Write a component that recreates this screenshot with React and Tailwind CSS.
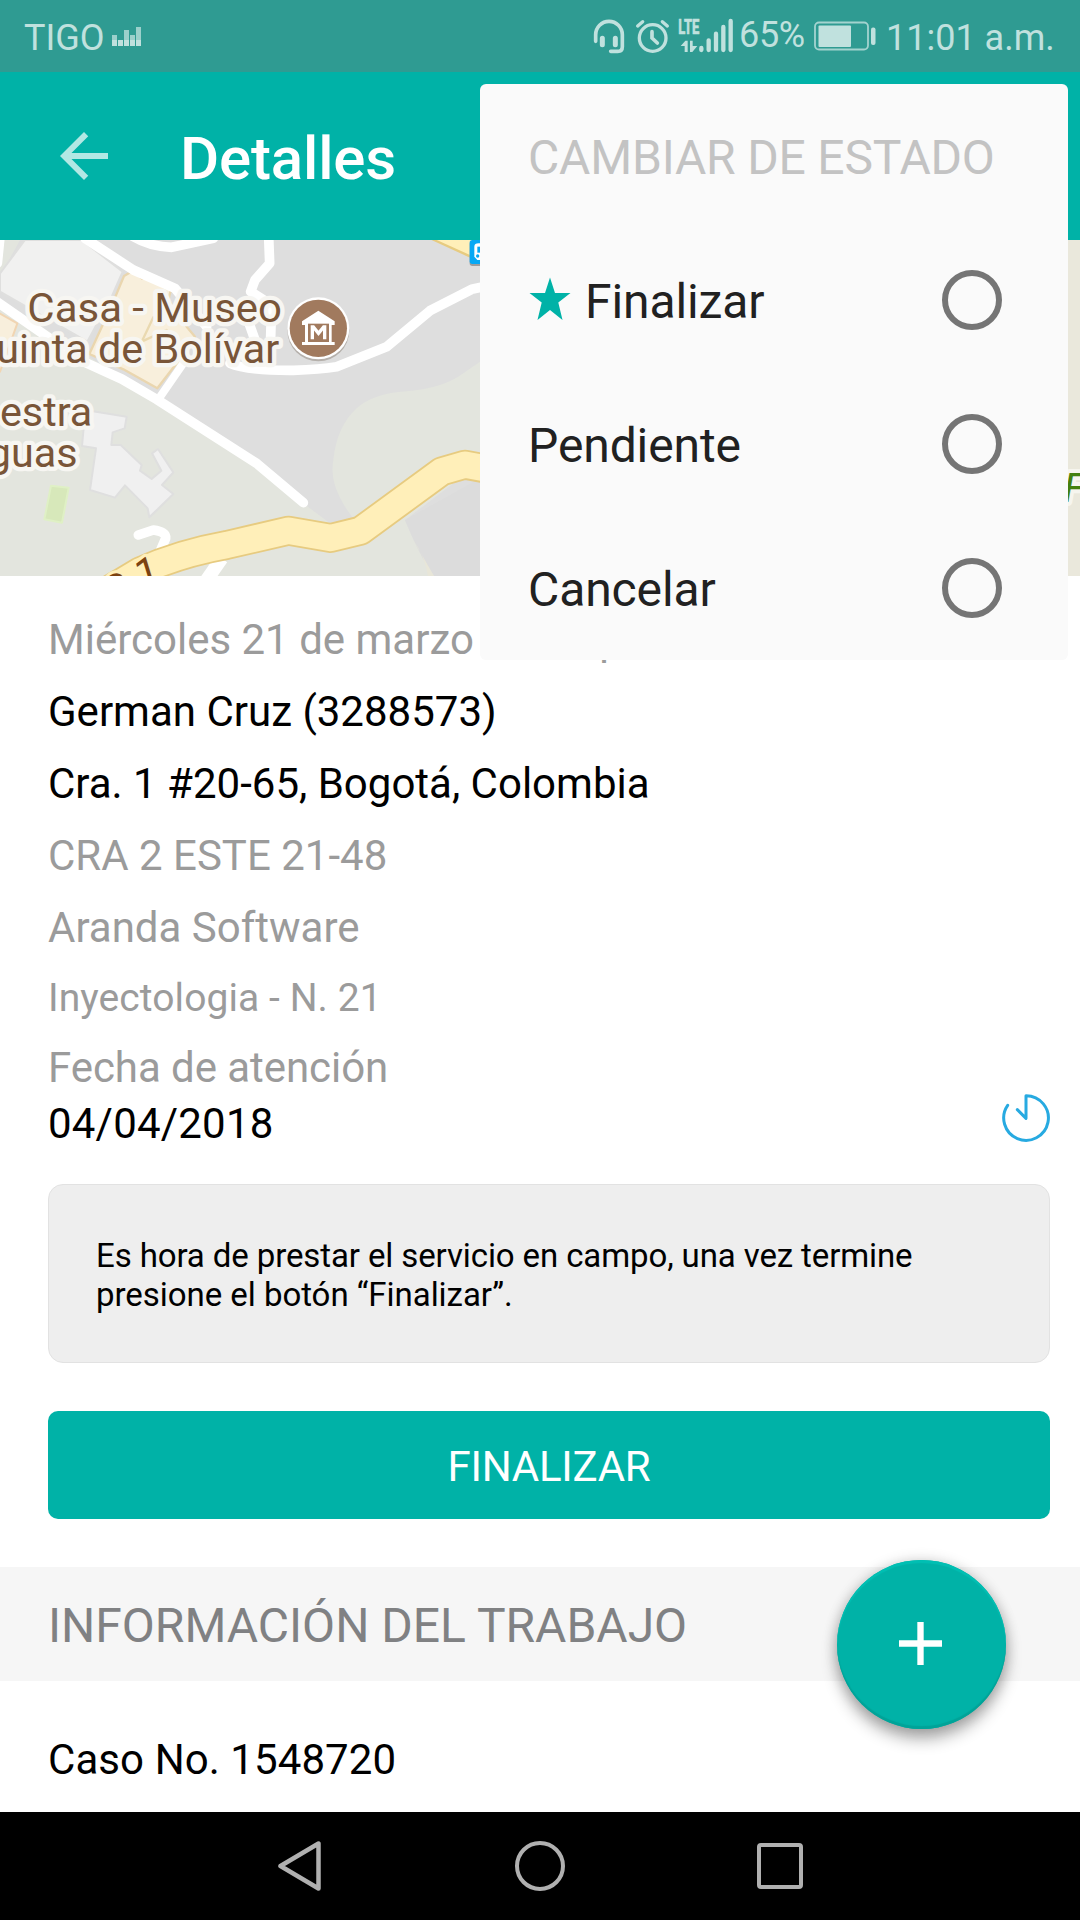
const statusTint = "#c0e1de";

function StatusIcons() {
  return (
    <svg viewBox="90 0 438 216" className="h-[72px] w-[146px] shrink-0" fill="none" stroke={statusTint} strokeLinecap="round">
      {/* headset */}
      <path d="M107 124V104a40 40 0 0 1 80 0V140q0 14 -14 14H152" strokeWidth="11" />
      <path d="M127 115V134M166 115V134" strokeWidth="15" />
      {/* alarm clock */}
      <circle cx="278" cy="114" r="40" strokeWidth="10" />
      <path d="M276 95V114L292 129" strokeWidth="11" />
      <path d="M233 78L248 65M307 65L322 78" strokeWidth="10" />
      {/* network */}
      <text x="355" y="101" fontSize="61" fontWeight="700" fontFamily="Roboto, sans-serif" textLength="63" lengthAdjust="spacingAndGlyphs" fill={statusTint} stroke={statusTint} strokeWidth="2">LTE</text>
      <path d="M383 122V156H374V138H362L376 122ZM390 122H398V138H412L397 156H390Z" fill={statusTint} stroke="none" />
      <path d="M424 144V150M446 121V150M468 101V150M490 81V150M512 63V150" strokeWidth="13" />
    </svg>
  );
}

function StatusBar() {
  return (
    <div className="flex h-[72px] items-center bg-[#2f9b92] pl-6 pr-[25px] text-[36px] leading-[72px] text-[#c0e1de]">
      <span className="w-[88px] pt-[3px]">TIGO</span>
      <svg viewBox="0 0 29 20" className="h-5 w-[29px] mt-[1px]" fill={statusTint}>
        <path opacity=".75" d="M0 8h5v11H0zM6 13h5v6H6zM12 3h5v16h-5zM18 8h5v11h-5zM24 0h5v19h-5z" />
        <path d="M0 13h5v6H0zM6 13h5v6H6zM12 13h5v6h-5zM18 13h5v6h-5zM24 13h5v6h-5z" />
      </svg>
      <div className="ml-auto flex items-center">
        <StatusIcons />
        <span className="ml-[3px] w-[75px] -mt-[3px] tracking-[-0.3px]">65%</span>
        <svg viewBox="0 0 62 30" className="mt-[-1px] h-[30px] w-[62px]" fill={statusTint}>
          <rect x="1" y="1.5" width="53" height="27" rx="4" fill="none" stroke={statusTint} strokeWidth="1.8" opacity=".8" />
          <rect x="4.500" y="4.500" width="32.500" height="21.500" rx="1" />
          <rect x="57" y="6.500" width="4.500" height="17.500" rx="2" />
        </svg>
        <span className="ml-[10px] w-[169px] whitespace-nowrap pt-[3px]">11:01 a.m.</span>
      </div>
    </div>
  );
}

function Header() {
  return (
    <div className="flex h-[168px] items-center bg-[#00b2a7] pl-12">
      <svg viewBox="0 0 24 24" className="h-[72px] w-[72px]" fill="#b2e8e4">
        <path d="M20 11H7.830l5.590-5.590L12 4l-8 8 8 8 1.410-1.410L7.830 13H20z" />
      </svg>
      <h1 className="ml-[60px] pt-[5px] text-[60px] font-medium tracking-[-0.15px] text-white">Detalles</h1>
    </div>
  );
}

function Map() {
  return (
    <svg viewBox="0 30 3240 1008" className="block h-[336px] w-full" fill="none" strokeLinejoin="round" strokeLinecap="round" fontFamily="Roboto, sans-serif" fontSize="124">
      <rect y="30" width="3240" height="1008" fill="#dedede" />
      {/* terrain */}
      <path d="M0 30H60L0 140V210L470 510L770 700L910 820L990 880L1060 865Q985 770 1000 690Q1010 590 1070 535Q1120 490 1220 484Q1330 475 1390 430L1440 395V700L1215 870Q1260 980 1302 1038H0Z" fill="#e3e5de" />
      <path d="M1440 745L1215 870Q1260 980 1302 1038H1600V700Z" fill="#dcdcdc" />
      <path d="M1240 930L1302 1038H1284Q1275 980 1240 930Z" fill="#e8e6d8" />
      <rect x="3150" y="30" width="90" height="1008" fill="#eae8dc" />
      {/* blocks and buildings */}
      <path d="M75 30H245L368 125L335 200L262 335L0 185V130Z" fill="#f1f1f0" stroke="#dfdfde" strokeWidth="6" />
      <path d="M399 122L426 146L440 138L515 170L505 210L560 290L585 320L530 400L472 475L370 418L268 372L340 215L372 138Z" fill="#f8efdc" stroke="#ead6af" strokeWidth="7" />
      <path d="M460 262L425 335L500 300" stroke="#ead9b0" strokeWidth="7" />
      <path d="M-10 245L52 280L0 425" fill="#f8efdc" stroke="#f1d5b2" strokeWidth="6" />
      <path d="M256 540L380 560L374 595L338 607L334 645L362 645L425 705L420 722L455 747L484 722L456 670L474 657L520 727L486 765L520 792L448 862L443 835L375 766L345 803L270 780L288 655L246 648Z" fill="#f0f0f0" stroke="#dfdfdf" strokeWidth="6" />
      <path d="M153 767L206 773L186 878L133 868Z" fill="#d7e8ba" stroke="#dff0c5" strokeWidth="6" />
      {/* streets */}
      <g stroke="#fff" strokeWidth="29">
        <path d="M-10 215L130 312L250 395L365 447L470 508L770 700L910 818" />
        <path d="M255 25L400 120L525 175L620 290" />
        <path d="M400 20Q450 50 515 52L640 25" />
        <path d="M806 20L809 100L765 150L752 185L815 225L812 320" />
        <path d="M740 260L765 330" />
        <path d="M0 20L-8 100" />
        <path d="M690 400Q740 422 880 421Q960 418 1010 410L1160 350L1290 242L1415 178L1450 170" />
        <path d="M550 400L482 498" strokeWidth="24" />
        <path d="M415 915L460 900Q500 905 497 925L480 965L440 1000" />
        <path d="M665 985L620 1050" strokeWidth="40" strokeLinecap="butt" />
      </g>
      {/* main avenue */}
      <g strokeLinecap="butt">
        <path d="M310 1090L420 1024Q540 970 680 945L866 902L992 924L1082 902L1325 724L1395 704L1460 716" stroke="#e7cb80" strokeWidth="90" />
        <path d="M310 1090L420 1024Q540 970 680 945L866 902L992 924L1082 902L1325 724L1395 704L1460 716" stroke="#ffefb9" strokeWidth="79" />
        <path d="M1290 28L1410 83H1450V28Z" fill="#e7cb80" />
        <path d="M1306 28L1410 75H1450V28Z" fill="#ffefb9" />
      </g>
      {/* bus stop */}
      <rect x="1409" y="34" width="80" height="74" rx="8" fill="#9c9c9c" />
      <rect x="1409" y="30" width="80" height="72" rx="8" fill="#06a8f4" />
      <path d="M1423 80V50Q1423 40 1436 40H1475V90H1432Z" fill="#fff" />
      <path d="M1432 50H1475V68H1432Z" fill="#06a8f4" />
      <circle cx="1433" cy="78" r="5" fill="#06a8f4" />
      {/* labels */}
      <g fill="#795538" stroke="#f7f6f2" strokeWidth="26" paintOrder="stroke">
        <text x="82" y="275" textLength="764" lengthAdjust="spacingAndGlyphs">Casa - Museo</text>
        <text x="838" y="400" textAnchor="end">uinta de Bolívar</text>
        <text x="277" y="587" textAnchor="end">estra</text>
        <text x="233" y="712" textAnchor="end">guas</text>
      </g>
      <text transform="translate(486 1056) rotate(-17)" textAnchor="end" fill="#7c4310" stroke="#ffefb9" strokeWidth="18" paintOrder="stroke" fontSize="122">a 1</text>
      <text x="3190" y="816" fontStyle="italic" fill="#43800f" stroke="#f6f5ee" strokeWidth="24" paintOrder="stroke">F</text>
      {/* museum pin */}
      <circle cx="955" cy="301" r="93" fill="#b5b0ab" />
      <circle cx="955" cy="295" r="93" fill="#fff" />
      <circle cx="955" cy="295" r="86" fill="#a17a5e" />
      <path d="M955 242L1004 274V285H995V336H1004V345H906V336H915V285H906V274Z" fill="#fff" />
      <path d="M924 281H987V336H924Z" fill="#a17a5e" />
      <path d="M937 328V291H940L955.500 310L971 291H974V328" stroke="#fff" strokeWidth="10" strokeLinejoin="miter" strokeLinecap="butt" />
    </svg>
  );
}

function Radio() {
  return <span className="h-[60px] w-[60px] rounded-full border-[6px] border-[#757575]" />;
}

function MenuItem({ label, starred }) {
  return (
    <li className="flex h-36 items-center justify-between">
      <span className="flex items-center">
        {starred && (
          <svg viewBox="0 0 44 46" className="-mt-[2px] mr-[13px] h-[46px] w-11" fill="#00b2a7">
            <path d="M22 1.500L27 17H42.500L30.300 26.500L34.500 44L22 34L9.500 44L13.700 26.500L1.500 17H17Z" />
          </svg>
        )}
        <span className="pt-[3px]">{label}</span>
      </span>
      <Radio />
    </li>
  );
}

function StatusMenu() {
  return (
    <div className="absolute left-[480px] top-[84px] h-[576px] w-[588px] rounded-md bg-[#fafafa] pl-12 pr-[66px] text-[48px] tracking-[-0.1px] text-[#212121]">
      <div className="flex h-36 items-center whitespace-nowrap pt-[3px] tracking-[-0.18px] text-[#c3c3c3]">CAMBIAR DE ESTADO</div>
      <ul>
        <MenuItem label="Finalizar" starred />
        <MenuItem label="Pendiente" />
        <MenuItem label="Cancelar" />
      </ul>
    </div>
  );
}

function Details() {
  return (
    <div className="pl-12 pr-[30px] pt-7 text-[42px] leading-[72px] text-black">
      <p className="text-[#9b9b9b]">Miércoles 21 de marzo 02:00 p.m.</p>
      <p>German Cruz (3288573)</p>
      <p>Cra. 1 #20-65, Bogotá, Colombia</p>
      <p className="text-[#9b9b9b]">CRA 2 ESTE 21-48</p>
      <p className="text-[#9b9b9b]">Aranda Software</p>
      <p className="text-[39px] leading-[69px] tracking-[0.08px] text-[#9b9b9b]">Inyectologia - N. 21</p>
      <div className="flex items-end justify-between">
        <div>
          <p className="-mt-px leading-[71px] tracking-[-0.06px] text-[#9b9b9b]">Fecha de atención</p>
          <p className="leading-[42px] tracking-[0.2px]">04/04/2018</p>
        </div>
        <svg viewBox="186 101 144 144" className="mb-[3px] h-12 w-12" fill="none" stroke="#27aae1" strokeWidth="9" strokeLinecap="round" strokeLinejoin="round">
          <path d="M232 148L258 174V106A67 67 0 1 1 203 135" />
        </svg>
      </div>
      <div className="mt-[39px] h-[179px] rounded-[15px] border border-[#e2e2e2] bg-[#eeeeee] px-[47px] pt-[51px] text-[33px] leading-[39px]">
        <p className="tracking-[-0.11px]">Es hora de prestar el servicio en campo, una vez termine</p>
        <p className="tracking-[-0.04px]">presione el botón “Finalizar”.</p>
      </div>
      <button className="mt-12 flex h-[108px] w-full items-center justify-center rounded-[10px] bg-[#00b2a7] pt-[3px] tracking-[-0.25px] text-white">FINALIZAR</button>
    </div>
  );
}

function NavBar() {
  return (
    <div className="flex h-[108px] items-center bg-black px-[180px]">
      <div className="flex flex-1 justify-center">
        <svg viewBox="0 0 44 50" className="h-[50px] w-11" fill="none" stroke="#b0b0b0" strokeWidth="4.500" strokeLinejoin="round">
          <path d="M40.500 2.500V47.500L2.500 25Z" />
        </svg>
      </div>
      <div className="flex flex-1 justify-center">
        <span className="h-[50px] w-[50px] rounded-full border-4 border-[#b0b0b0]" />
      </div>
      <div className="flex flex-1 justify-center">
        <span className="h-[46px] w-[46px] rounded-[4px] border-4 border-[#b0b0b0]" />
      </div>
    </div>
  );
}

export default function App() {
  return (
    <div className="relative flex h-[1920px] w-[1080px] flex-col overflow-hidden bg-white font-['Roboto',sans-serif]">
      <StatusBar />
      <Header />
      <Map />
      <Details />
      <div className="mt-12 flex h-[114px] items-center bg-[#f6f6f6] pl-12 pt-[3px] text-[48px] text-[#808183]">INFORMACIÓN DEL TRABAJO</div>
      <div className="flex flex-1 items-start pl-12 pt-[43px] text-[42px] leading-[72px] tracking-[0.08px] text-black">Caso No. 1548720</div>
      <NavBar />
      <StatusMenu />
      <button aria-label="Agregar" className="absolute left-[836.500px] top-[1559.500px] flex h-[169px] w-[169px] items-center justify-center rounded-full bg-[#00b2a7] shadow-[inset_0_3px_1px_#00bfb3,inset_0_-3px_1px_#00a398,0_10px_16px_rgba(0,0,0,0.32),0_0_14px_rgba(0,0,0,0.16)]">
        <svg viewBox="0 0 42 42" className="-ml-px -mt-px h-[43px] w-[43px]" stroke="#fff" strokeWidth="6.200">
          <path d="M21 0V42M0 21H42" />
        </svg>
      </button>
    </div>
  );
}
